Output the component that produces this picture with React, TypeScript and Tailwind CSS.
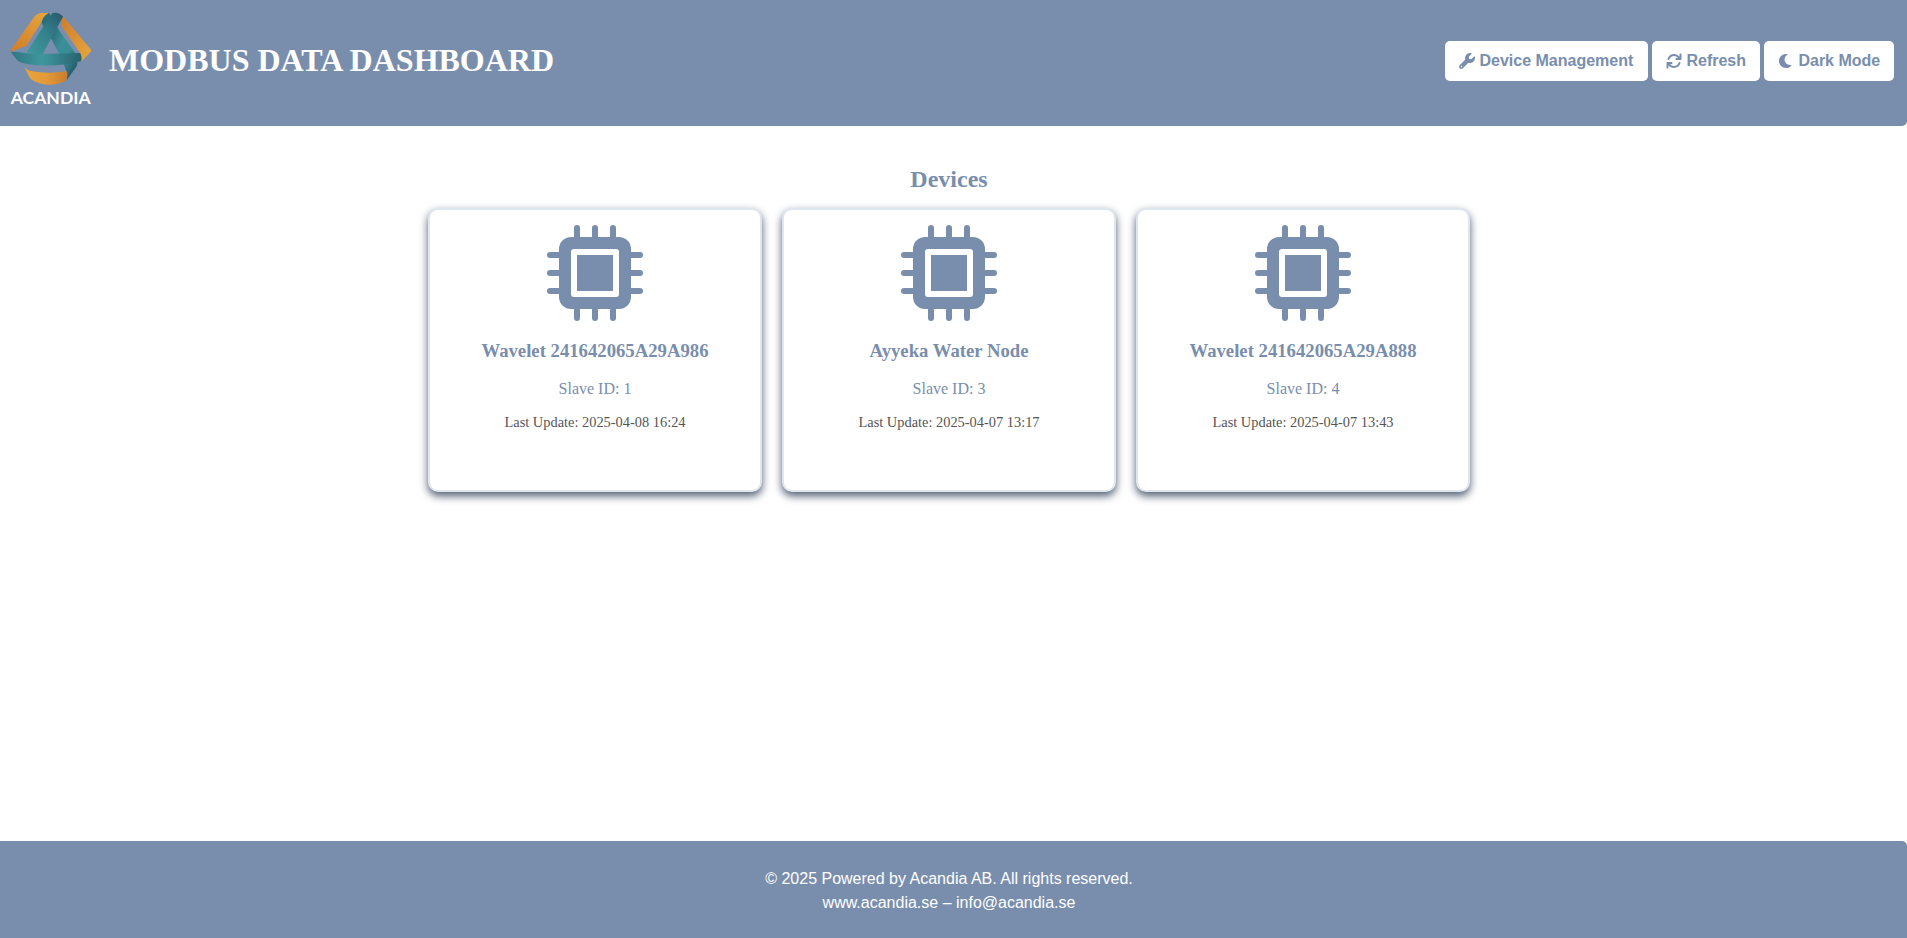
import type { ReactNode } from 'react';

const devices = [
  { name: 'Wavelet 241642065A29A986', slave: 1, updated: '2025-04-08 16:24' },
  { name: 'Ayyeka Water Node', slave: 3, updated: '2025-04-07 13:17' },
  { name: 'Wavelet 241642065A29A888', slave: 4, updated: '2025-04-07 13:43' },
];

const wrenchPath =
  'M507.6 122.8c-2.904-12.09-18.25-16.13-27.04-7.338l-76.55 76.56l-83.1-.0002l0-83.1l76.55-76.56c8.791-8.789 4.75-24.14-7.336-27.04c-23.69-5.693-49.34-6.111-75.92 .2484c-61.45 14.7-109.4 66.9-119.2 129.3C189.8 160.8 192.3 186.7 200.1 210.1l-178.1 178.1c-28.12 28.12-28.12 73.69 0 101.8C35.16 504.1 53.56 512 71.1 512s36.84-7.031 50.91-21.09l178.1-178.1c23.46 7.736 49.31 10.24 76.17 6.004c62.41-9.84 114.6-57.8 129.3-119.2C513.7 172.1 513.3 146.5 507.6 122.8zM80 456c-13.25 0-24-10.75-24-24c0-13.26 10.75-24 24-24s24 10.74 24 24C104 445.3 93.25 456 80 456z';
const refreshPath =
  'M464 16c-17.67 0-32 14.31-32 32v74.09C392.1 66.52 327.4 32 256 32C161.5 32 78.59 92.34 49.58 182.2c-5.438 16.81 3.797 34.88 20.61 40.28c16.89 5.5 34.88-3.812 40.3-20.59C130.9 138.5 189.4 96 256 96c50.5 0 96.26 24.55 124.4 64H336c-17.67 0-32 14.31-32 32s14.33 32 32 32h128c17.67 0 32-14.31 32-32V48C496 30.31 481.7 16 464 16zM441.8 289.6c-16.92-5.438-34.88 3.812-40.3 20.59C381.1 373.5 322.6 416 256 416c-50.5 0-96.25-24.55-124.4-64H176c17.67 0 32-14.31 32-32s-14.33-32-32-32h-128c-17.67 0-32 14.31-32 32v144c0 17.69 14.33 32 32 32s32-14.31 32-32v-74.09C119.9 445.5 184.6 480 255.1 480c94.45 0 177.4-60.34 206.4-150.2C467.9 313 458.6 294.1 441.8 289.6z';
const moonPath =
  'M32 256c0-123.8 100.3-224 223.8-224c11.36 0 29.7 1.668 40.9 3.746c9.616 1.777 11.75 14.63 3.279 19.44C245 86.5 211.2 144.6 211.2 207.8c0 109.7 99.71 193 208.3 172.3c9.561-1.805 16.28 9.324 10.11 16.95C387.9 448.6 324.8 480 255.8 480C132.1 480 32 379.6 32 256z';

function Chip() {
  return (
    <svg viewBox="0 0 96 96" className="size-24 text-[#798ead]">
      <path d="M30 3V93M48 3V93M66 3V93M3 30H93M3 48H93M3 66H93" stroke="currentColor" strokeWidth="6" strokeLinecap="round" />
      <rect x="12" y="12" width="72" height="72" rx="12" fill="currentColor" />
      <rect x="24" y="24" width="48" height="48" rx="3" fill="white" />
      <rect x="30" y="30" width="36" height="36" fill="currentColor" />
    </svg>
  );
}

function Logo() {
  return (
    <div className="mt-3 ml-2.5 w-[82px] shrink-0">
      <svg viewBox="30 36 246 222" className="block h-[74px] w-[82px]">
        <defs>
          <linearGradient id="gold" x1="0" y1="1" x2="1" y2="0">
            <stop offset="0" stopColor="#cf7d2e" />
            <stop offset="0.3" stopColor="#d6882f" />
            <stop offset="1" stopColor="#eaa63c" />
          </linearGradient>
          <linearGradient id="goldRight" x1="0" y1="0" x2="1" y2="1">
            <stop offset="0" stopColor="#cf7a2e" />
            <stop offset="1" stopColor="#e8a83c" />
          </linearGradient>
          <linearGradient id="goldBase" x1="0" y1="0" x2="1" y2="0">
            <stop offset="0" stopColor="#e9a43a" />
            <stop offset="0.5" stopColor="#e39b38" />
            <stop offset="1" stopColor="#cb7c2e" />
          </linearGradient>
          <linearGradient id="tealLeft" x1="0" y1="1" x2="1" y2="0">
            <stop offset="0" stopColor="#419aa0" />
            <stop offset="0.55" stopColor="#337f8a" />
            <stop offset="1" stopColor="#25596b" />
          </linearGradient>
          <linearGradient id="tealRight" x1="0" y1="0" x2="1" y2="1">
            <stop offset="0" stopColor="#25596b" />
            <stop offset="0.4" stopColor="#3b8f98" />
            <stop offset="0.6" stopColor="#388c95" />
            <stop offset="0.9" stopColor="#235467" />
          </linearGradient>
          <linearGradient id="tealBase" x1="0" y1="0" x2="1" y2="0">
            <stop offset="0" stopColor="#2f7482" />
            <stop offset="0.45" stopColor="#40979e" />
            <stop offset="1" stopColor="#28616f" />
          </linearGradient>
        </defs>
        <path d="M32 152 Q36 143 42 136 L103 50 Q112 39 126 39 L148 39 Q137 44 132 54 L78 139 Q60 143 34 156 Z" fill="url(#gold)" />
        <path d="M179 48 Q186 45 190 50 L272 148 Q275 152 271 157 L243 186 Q247 170 240 158 L184 77 Q188 60 179 48 Z" fill="url(#goldRight)" />
        <path d="M125 67 Q127 50 146 39 Q153 42 151 54 L136 82 Q128 79 125 67 Z" fill="#2b6f7d" />
        <path d="M140 90 L170 78 L178 92 L228 162 Q236 182 230 199 L201 239 Q204 222 196 205 L178 163 L154 117 Z" fill="url(#tealRight)" />
        <path d="M72 198 Q78 211 96 214 Q145 222 201 214 Q205 229 197 242 Q150 266 100 242 Q90 238 85 225 Z" fill="url(#goldBase)" />
        <path d="M32 155 Q50 155 74 159 Q120 163 240 159 Q247 169 243 184 Q160 205 76 191 Q59 188 51 180 Z" fill="url(#tealBase)" />
        <path d="M158 39 Q178 36 189 50 L152 117 L128 162 Q103 164 78 160 L144 58 Q151 46 158 39 Z" fill="url(#tealLeft)" />
      </svg>
      <svg viewBox="0 0 82 24" className="block h-6 w-[82px]">
        <text x="0.7" y="17.7" textLength="80" lengthAdjust="spacingAndGlyphs" className="fill-white font-['Lato',sans-serif] text-[16.3px] font-bold">
          ACANDIA
        </text>
      </svg>
    </div>
  );
}

function HeaderButton({ path, children, width }: { path: string; children: ReactNode; width: string }) {
  return (
    <button className={`${width} flex h-10 items-center rounded-[5px] bg-white pl-3.5 text-base font-bold whitespace-nowrap text-[#798ead]`}>
      <svg viewBox="0 0 512 512" className="mr-[4.45px] size-4 shrink-0 fill-current">
        <path d={path} />
      </svg>
      <span>{children}</span>
    </button>
  );
}

function DeviceCard({ name, slave, updated }: { name: string; slave: number; updated: string }) {
  return (
    <article className="flex h-[284px] w-[334px] flex-col items-center rounded-[10px] border-2 border-[#dfe6ee] bg-white pt-[15px] shadow-[0_4px_8px_#505c70]">
      <Chip />
      <h3 className="mt-[19px] text-[18.72px] leading-[22px] font-bold text-[#798ead]">{name}</h3>
      <p className="mt-[18px] text-base leading-[18px] text-[#798ead]">Slave ID: {slave}</p>
      <p className="mt-4 text-[14.4px] leading-4 text-[#555555]">Last Update: {updated}</p>
    </article>
  );
}

export default function App() {
  return (
    <div className="flex h-[938px] w-[1907px] flex-col overflow-hidden bg-white font-['Liberation_Serif',serif]">
      <header className="flex h-[126px] shrink-0 items-start rounded-br-[5px] bg-[#798ead]">
        <Logo />
        <h1 className="mt-[42px] ml-[17px] text-[32px] leading-9 font-bold text-white">MODBUS DATA DASHBOARD</h1>
        <nav className="mt-[41px] mr-[13px] ml-auto flex gap-1 font-['Liberation_Sans',sans-serif]">
          <HeaderButton width="w-[203px]" path={wrenchPath}>Device Management</HeaderButton>
          <HeaderButton width="w-[108px]" path={refreshPath}>Refresh</HeaderButton>
          <HeaderButton width="w-[130px]" path={moonPath}>Dark Mode</HeaderButton>
        </nav>
      </header>
      <main className="flex w-[1898px] flex-1 flex-col items-center pt-[39px]">
        <h2 className="text-2xl leading-7 font-bold text-[#798ead]">Devices</h2>
        <section className="mt-[15px] flex gap-5">
          {devices.map((device) => (
            <DeviceCard key={device.name} {...device} />
          ))}
        </section>
      </main>
      <footer className="h-[97px] shrink-0 rounded-tr-[5px] bg-[#798ead] pt-[26px] text-center font-['Liberation_Sans',sans-serif] text-base leading-6 text-white">
        <div className="w-[1898px]">
          <p>© 2025 Powered by Acandia AB. All rights reserved.</p>
          <p>www.acandia.se – info@acandia.se</p>
        </div>
      </footer>
    </div>
  );
}
